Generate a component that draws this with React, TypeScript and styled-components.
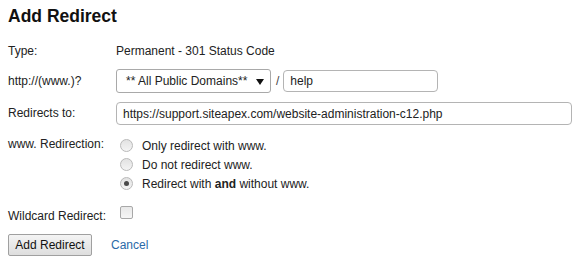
import React, { useState } from 'react';
import styled, { createGlobalStyle } from 'styled-components';

const GlobalStyle = createGlobalStyle`
  body {
    margin: 0;
    background: #fff;
    font-family: "Liberation Sans", Arial, sans-serif;
    font-size: 12px;
    color: #222;
  }
`;

const Page = styled.div`
  width: 576px;
  height: 260px;
  padding: 5px 8px 0;
  box-sizing: border-box;
  overflow: hidden;
`;

const Title = styled.h2`
  margin: 0;
  font-size: 17.5px;
  line-height: 22px;
  font-weight: bold;
  color: #111;
`;

const Row = styled.div<{ top: number; height: number }>`
  display: flex;
  align-items: flex-start;
  margin-top: ${(p) => p.top}px;
  min-height: ${(p) => p.height}px;
`;

const Label = styled.div<{ lineHeight: number }>`
  width: 108px;
  flex: none;
  line-height: ${(p) => p.lineHeight}px;
`;

const Value = styled.div<{ lineHeight?: number }>`
  flex: 1;
  display: flex;
  align-items: center;
  line-height: ${(p) => p.lineHeight ?? 20}px;
`;

const SelectBox = styled.div`
  position: relative;
  width: 155px;
  height: 24px;
  box-sizing: border-box;
  border: 1px solid #a9a9a9;
  border-radius: 3px;
  padding-left: 9px;
  line-height: 22px;
  background: #fff;
`;

const Arrow = styled.span`
  position: absolute;
  right: 6px;
  top: 9px;
  width: 0;
  height: 0;
  border-left: 4px solid transparent;
  border-right: 4px solid transparent;
  border-top: 6px solid #111;
`;

const Slash = styled.span`
  margin: 0 4px 0 5px;
  color: #444;
`;

const TextInput = styled.input<{ width: number }>`
  width: ${(p) => p.width}px;
  height: 22px;
  box-sizing: border-box;
  border: 1px solid #b4b4b4;
  border-radius: 4px;
  padding: 0 6px;
  font-family: "Liberation Sans", Arial, sans-serif;
  font-size: 12px;
  color: #222;
  outline: none;
`;

const RadioList = styled.div`
  display: flex;
  flex-direction: column;
`;

const RadioLine = styled.label`
  display: flex;
  align-items: center;
  height: 19px;
  padding-left: 4px;
  gap: 9px;
`;

const Radio = styled.span<{ checked: boolean }>`
  position: relative;
  width: 13px;
  height: 13px;
  box-sizing: border-box;
  border-radius: 50%;
  border: 1px solid #b9b9b9;
  background: linear-gradient(#e2e2e2, #f4f4f4);
  &::after {
    content: '';
    display: ${(p) => (p.checked ? 'block' : 'none')};
    position: absolute;
    left: 3px;
    top: 3px;
    width: 5px;
    height: 5px;
    border-radius: 50%;
    background: #4a4a4a;
  }
`;

const Checkbox = styled.span`
  margin-left: 4px;
  width: 13px;
  height: 13px;
  box-sizing: border-box;
  border: 1px solid #a8a8a8;
  border-radius: 2px;
  background: linear-gradient(#e8e8e8, #f6f6f6);
`;

const Actions = styled.div`
  display: flex;
  align-items: center;
  margin-top: 8px;
  gap: 19px;
`;

const Button = styled.button`
  height: 22px;
  width: 84px;
  padding: 0;
  border: 1px solid #a0a0a0;
  border-radius: 2px;
  background: linear-gradient(#f4f4f4, #dedede);
  font-family: "Liberation Sans", Arial, sans-serif;
  font-size: 12px;
  color: #111;
`;

const Link = styled.a`
  color: #2a6aa8;
  text-decoration: none;
  font-size: 12px;
`;

const options = [
  { id: 'only', label: 'Only redirect with www.' },
  { id: 'none', label: 'Do not redirect www.' },
  { id: 'both', label: 'both' },
];

export default function App() {
  const [mode, setMode] = useState('both');

  return (
    <Page>
      <GlobalStyle />
      <Title>Add Redirect</Title>

      <Row top={14} height={20}>
        <Label lineHeight={20}>Type:</Label>
        <Value>Permanent - 301 Status Code</Value>
      </Row>

      <Row top={8} height={24}>
        <Label lineHeight={24}>http://(www.)?</Label>
        <Value lineHeight={24}>
          <SelectBox>
            ** All Public Domains**
            <Arrow />
          </SelectBox>
          <Slash>/</Slash>
          <TextInput width={155} defaultValue="help" />
        </Value>
      </Row>

      <Row top={9} height={23}>
        <Label lineHeight={23}>Redirects to:</Label>
        <Value lineHeight={23}>
          <TextInput
            width={456}
            style={{ height: 23 }}
            defaultValue="https://support.siteapex.com/website-administration-c12.php"
          />
        </Value>
      </Row>

      <Row top={11} height={57}>
        <Label lineHeight={16}>www. Redirection:</Label>
        <RadioList>
          {options.map((o) => (
            <RadioLine key={o.id} onClick={() => setMode(o.id)}>
              <Radio checked={mode === o.id} />
              {o.id === 'both' ? (
                <span>
                  Redirect with <b>and</b> without www.
                </span>
              ) : (
                o.label
              )}
            </RadioLine>
          ))}
        </RadioList>
      </Row>

      <Row top={13} height={20}>
        <Label lineHeight={20}>Wildcard Redirect:</Label>
        <Value>
          <Checkbox />
        </Value>
      </Row>

      <Actions>
        <Button>Add Redirect</Button>
        <Link href="#">Cancel</Link>
      </Actions>
    </Page>
  );
}
